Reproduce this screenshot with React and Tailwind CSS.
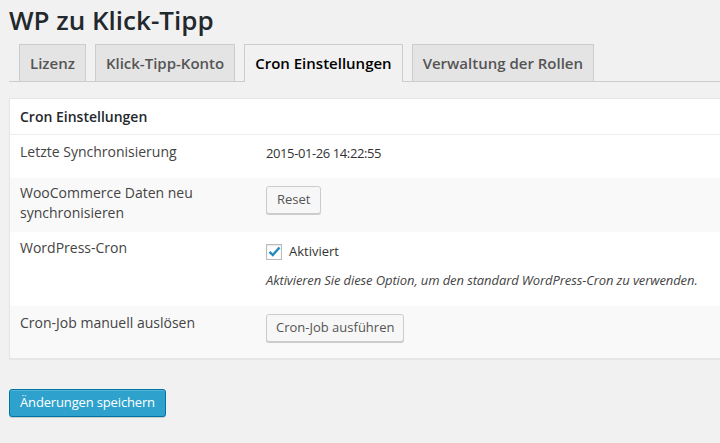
const tabs = ['Lizenz', 'Klick-Tipp-Konto', 'Cron Einstellungen', 'Verwaltung der Rollen'];

const Row = ({ label, shaded, children, className = '' }) => (
  <div className={`flex ${shaded ? 'bg-[#f9f9f9]' : 'bg-white'} ${className}`}>
    <div className="w-[256px] shrink-0 pl-[10px] text-[14px] leading-[20px] text-[#444]">{label}</div>
    <div className="flex-1 text-[13px] text-[#333]">{children}</div>
  </div>
);

const App = () => {
  const active = 2;
  return (
    <div className="min-h-[443px] bg-[#f1f1f1] pl-[9px] pt-[4px] text-[#444]" style={{ fontFamily: '"Open Sans", sans-serif' }}>
      <h1 className="text-[26px] leading-[32px] font-semibold text-[#23282d]">WP zu Klick-Tipp</h1>
      <div className="flex border-b border-[#ccc] mt-[8px] pl-[10px] gap-[9px]">
        {tabs.map((t, i) => (
          <div
            key={t}
            className={`px-[10px] h-[37px] flex items-center border border-b-0 border-[#ccc] text-[15px] font-semibold -mb-px ${i === active ? 'bg-[#f1f1f1] text-black h-[38px]' : 'bg-[#e4e4e4] text-[#555]'}`}
          >
            {t}
          </div>
        ))}
      </div>

      <div className="mt-[16px] bg-white border border-r-0 border-[#e5e5e5] shadow-[0_1px_1px_rgba(0,0,0,0.04)]">
        <div className="h-[36px] flex items-center pl-[10px] text-[14px] font-semibold text-[#23282d] border-b border-[#eee]">Cron Einstellungen</div>

        <Row label="Letzte Synchronisierung" className="h-[43px] pt-[7px]">
          <div className="pt-[1px] leading-[20px] tracking-[-0.4px]">2015-01-26 14:22:55</div>
        </Row>

        <Row label={<>WooCommerce Daten neu<br />synchronisieren</>} shaded className="h-[54px] pt-[5px]">
          <button className="mt-[3px] h-[28px] px-[10px] text-[13px] text-[#555] bg-[#f7f7f7] border border-[#ccc] rounded-[3px] shadow-[0_1px_0_#ccc]">Reset</button>
        </Row>

        <Row label="WordPress-Cron" className="h-[74px] pt-[6px]">
          <label className="flex items-center gap-[7px] pt-[4px]">
            <span className="w-[16px] h-[16px] border border-[#bbb] bg-white flex items-center justify-center shadow-[inset_0_1px_2px_rgba(0,0,0,0.1)]">
              <svg width="13" height="11" viewBox="0 0 13 11"><path d="M1.5 5.8 L4.8 9 L11.5 1.5" fill="none" stroke="#1e8cbe" strokeWidth="2.4" /></svg>
            </span>
            <span className="text-[13px] text-[#333]">Aktiviert</span>
          </label>
          <p className="italic text-[13px] text-[#444] mt-[9px] whitespace-nowrap tracking-[-0.1px]">Aktivieren Sie diese Option, um den standard WordPress-Cron zu verwenden.</p>
        </Row>

        <Row label="Cron-Job manuell auslösen" shaded className="h-[52px] pt-[7px]">
          <button className="mt-[1px] h-[28px] px-[9px] text-[13px] text-[#555] bg-[#f7f7f7] border border-[#ccc] rounded-[3px] shadow-[0_1px_0_#ccc]">Cron-Job ausführen</button>
        </Row>
      </div>

      <button className="mt-[30px] h-[28px] px-[10px] text-[13px] font-medium tracking-[-0.15px] text-white bg-[#2ea2cc] border border-[#0074a2] rounded-[3px] shadow-[inset_0_1px_0_rgba(120,200,230,0.5),0_1px_0_rgba(0,0,0,0.15)]">Änderungen speichern</button>
    </div>
  );
};

export default App;
